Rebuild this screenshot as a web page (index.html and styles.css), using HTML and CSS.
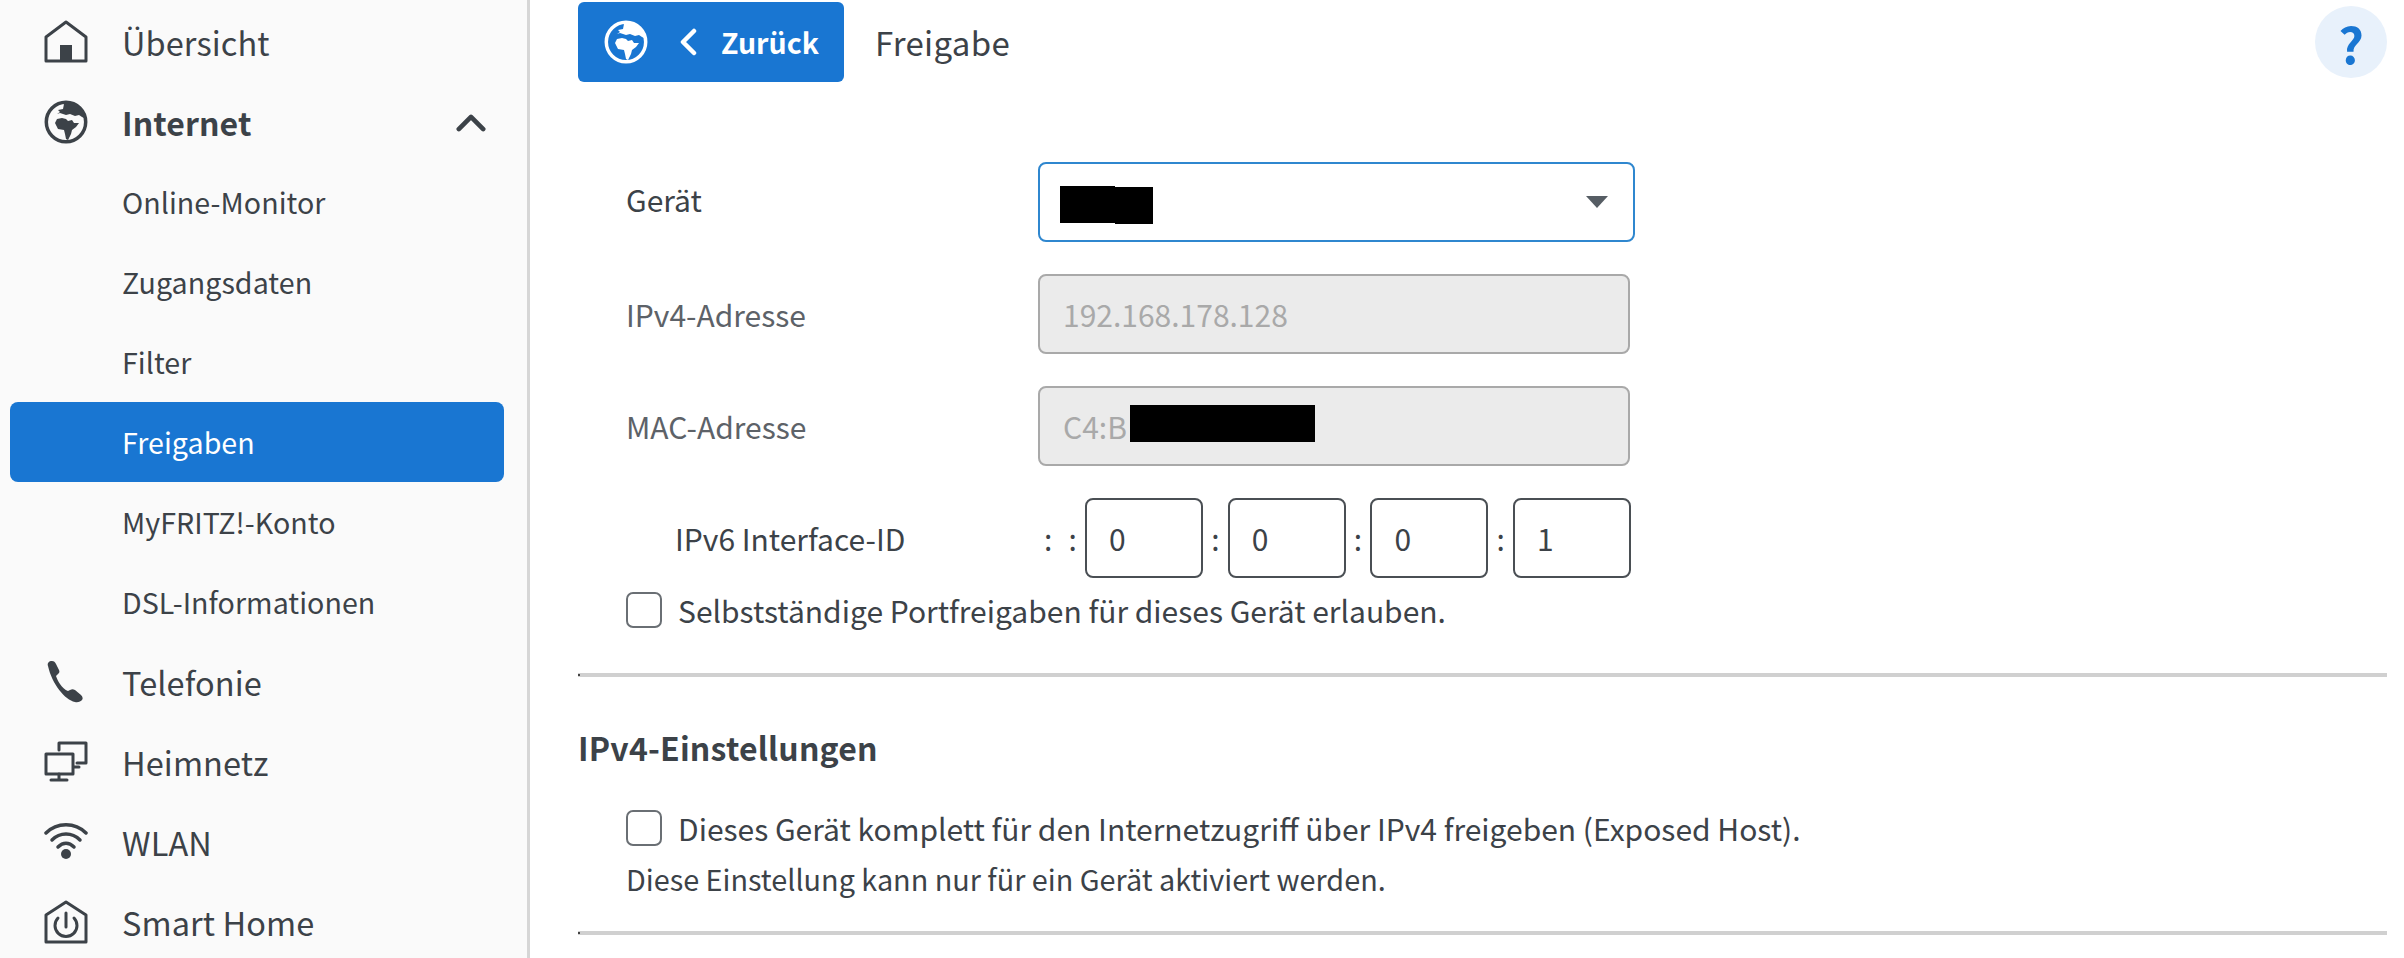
FILE: index.html
```html
<!DOCTYPE html>
<html lang="de">
<head>
<meta charset="utf-8">
<title>Freigabe</title>
<link rel="stylesheet" href="styles.css">
</head>
<body>
<svg class="defs" width="0" height="0" aria-hidden="true">
  <symbol id="globe" viewBox="0 0 44 44">
    <circle class="globe-ring" cx="22" cy="22" r="19.7"/>
    <path d="M14 10l5-1 1-5 11-1 8 7 3 9-4-2-3-2-4 1-5-2-4 1-6-2-3 1 3-2z"/>
    <path d="M11 23l2-4 5-1 4 1 2 2 4-1 2 3 5 0-3 4-4 3-1 4-3 6-2-1-1-5-1-4-6-1z"/>
  </symbol>
</svg>

<div class="layout">
  <nav class="sidebar">
    <a class="nav-item">
      <svg class="nav-icon" viewBox="0 0 44 44"><path class="line" d="M2 17 22 2l20 15v24H2z"/><path d="M16 25h12v16H16z"/></svg>
      <span>Übersicht</span>
    </a>
    <a class="nav-item nav-open">
      <svg class="nav-icon"><use href="#globe"/></svg>
      <span>Internet</span>
      <svg class="nav-chevron" viewBox="0 0 32 20"><path d="M3 17 16 4l13 13"/></svg>
    </a>
    <a class="nav-sub">Online-Monitor</a>
    <a class="nav-sub">Zugangsdaten</a>
    <a class="nav-sub">Filter</a>
    <a class="nav-sub nav-active">Freigaben</a>
    <a class="nav-sub">MyFRITZ!-Konto</a>
    <a class="nav-sub">DSL-Informationen</a>
    <a class="nav-item">
      <svg class="nav-icon" viewBox="0 0 44 44"><path d="M4 6c-1-3 1-5 4-5 2 0 3 1 4 3l3 6c1 2 0 3-1 4l-2 2c1 3 2 5 4 8s5 6 8 7l2-1c2-1 3-1 5 0l6 5c2 2 2 4 1 5s-4 3-7 2C21 40 8 24 4 6z"/></svg>
      <span>Telefonie</span>
    </a>
    <a class="nav-item">
      <svg class="nav-icon" viewBox="0 0 44 44"><path class="line thin" d="M15 10V3h27v20H33"/><path class="line thin" d="M2 14h27v20H2z"/><path class="line thin" d="M30 27h5M15 34v5M7 40h16"/></svg>
      <span>Heimnetz</span>
    </a>
    <a class="nav-item">
      <svg class="nav-icon" viewBox="0 0 44 44"><path class="line arc" d="M2 13C13 2 31 2 42 13"/><path class="line arc" d="M8 20c8-8 20-8 28 0"/><path class="line arc" d="M14 27c5-5 11-5 16 0"/><circle cx="22" cy="34" r="5"/></svg>
      <span>WLAN</span>
    </a>
    <a class="nav-item">
      <svg class="nav-icon" viewBox="0 0 44 44"><path class="line" d="M2 15 22 2l20 13v27H2z"/><path class="line" d="M14 18a11 11 0 1 0 16 0"/><path class="line" d="M22 13v14"/></svg>
      <span>Smart Home</span>
    </a>
  </nav>

  <main class="content">
    <header class="topbar">
      <a class="back">
        <svg class="back-globe"><use href="#globe"/></svg>
        <svg class="back-chevron" viewBox="0 0 18 28"><path d="M15 3 4 14l11 11"/></svg>
        <span>Zurück</span>
      </a>
      <h1 class="title">Freigabe</h1>
      <button class="help" type="button">?</button>
    </header>

    <section class="form">
      <div class="row row-first">
        <label class="label label-up">Gerät</label>
        <div class="select">
          <span class="redact-group"><span class="redact redact-a"></span><span class="redact redact-b"></span></span>
          <span class="caret"></span>
        </div>
      </div>
      <div class="row">
        <label class="label label-muted">IPv4-Adresse</label>
        <div class="field">192.168.178.128</div>
      </div>
      <div class="row">
        <label class="label label-muted">MAC-Adresse</label>
        <div class="field">C4:B<span class="redact redact-mac"></span></div>
      </div>
      <div class="row">
        <label class="label label-ipv6">IPv6 Interface-ID</label>
        <span class="colon colon-lead">:</span>
        <span class="colon colon-lead">:</span>
        <div class="box">0</div>
        <span class="colon">:</span>
        <div class="box">0</div>
        <span class="colon">:</span>
        <div class="box">0</div>
        <span class="colon">:</span>
        <div class="box">1</div>
      </div>
      <label class="check check-port"><span class="checkbox"></span>Selbstständige Portfreigaben für dieses Gerät erlauben.</label>
    </section>

    <hr class="rule rule-one">

    <h2 class="heading">IPv4-Einstellungen</h2>
    <section class="form">
      <label class="check check-host"><span class="checkbox"></span>Dieses Gerät komplett für den Internetzugriff über IPv4 freigeben (Exposed Host).</label>
      <p class="note">Diese Einstellung kann nur für ein Gerät aktiviert werden.</p>
    </section>

    <hr class="rule rule-two">
  </main>
</div>
</body>
</html>
```
FILE: styles.css
```css
* { box-sizing: border-box; }
html, body { margin: 0; height: 958px; overflow: hidden; background: #fff; }
body {
  font-family: "Noto Sans CJK SC", "Noto Sans", sans-serif;
  font-size: 30px;
  line-height: 40px;
  color: #3c4248;
}
.defs { position: absolute; }
.layout { display: flex; height: 958px; }

.sidebar {
  flex: 0 0 530px;
  height: 958px;
  padding: 2px 23px 0 10px;
  background: #fafafa;
  border-right: 3px solid #d6d6d6;
  overflow: hidden;
}
.nav-item, .nav-sub {
  display: flex;
  align-items: center;
  height: 80px;
  border-radius: 8px;
}
.nav-item { padding-left: 34px; gap: 34px; font-size: 32.5px; letter-spacing: .1px; color: #3c4248; }
.nav-sub { padding-left: 112px; font-size: 28.6px; letter-spacing: .05px; }
.nav-open { font-weight: 600; font-size: 32px; }
.nav-active { background: #1976d2; color: #fff; }
.nav-icon { width: 44px; height: 44px; flex: none; fill: #3c4248; color: #3c4248; }
.globe-ring { fill: none; stroke: currentColor; stroke-width: 3.5; }
.line { fill: none; stroke: #3c4248; stroke-width: 3; stroke-linejoin: round; stroke-linecap: round; }
.line.thin { stroke-width: 3; }
.line.arc { stroke-width: 3.5; }
.nav-chevron { width: 30px; height: 19px; margin-left: auto; margin-right: 18px; fill: none; stroke: #3c4248; stroke-width: 5; stroke-linecap: round; stroke-linejoin: round; }

.content { flex: 1; min-width: 0; padding: 2px 17px 0 48px; }
.topbar { display: flex; align-items: center; height: 80px; }
.back {
  display: flex;
  align-items: center;
  width: 266px;
  height: 80px;
  padding-left: 26px;
  border-radius: 6px;
  background: #1976d2;
  color: #fff;
  font-weight: 600;
  font-size: 28.5px;
}
.back-globe { width: 44px; height: 44px; fill: #fff; color: #fff; flex: none; }
.back-chevron { width: 18px; height: 28px; margin: 0 24px 0 31px; fill: none; stroke: #fff; stroke-width: 4.5; stroke-linecap: round; stroke-linejoin: round; flex: none; }
.title { margin: 0 0 0 31px; font-size: 33px; font-weight: 400; letter-spacing: .3px; }
.help {
  width: 72px;
  height: 72px;
  margin-left: auto;
  border: 0;
  border-radius: 50%;
  background: #e8f1fb;
  color: #1976d2;
  font-family: inherit;
  font-size: 50px;
  font-weight: 700;
  line-height: 68px;
  padding: 0;
}

.form { padding-left: 48px; }
.row { display: flex; align-items: center; margin-top: 32px; height: 80px; }
.row-first { margin-top: 80px; }
.label { flex: 0 0 412px; }
.label-up { margin-bottom: 6px; }
.label-muted { color: #5d6268; }
.label-ipv6 { flex-basis: 361px; margin-left: 49px; }
.select {
  display: flex;
  align-items: center;
  justify-content: space-between;
  width: 597px;
  height: 80px;
  padding: 0 25px 0 20px;
  background: #fff;
  border: 2px solid #2f87cf;
  border-radius: 8px;
}
.caret { width: 0; height: 0; border: 11px solid transparent; border-top: 12px solid #565d64; border-bottom: 0; }
.redact { display: inline-block; background: #000; }
.redact-group { display: flex; align-items: flex-start; margin-top: 6px; }
.redact-a { width: 55px; height: 37px; }
.redact-b { width: 38px; height: 37px; margin-top: 1px; }
.redact-mac { width: 185px; height: 37px; margin-left: 3px; vertical-align: -3px; }
.field {
  width: 592px;
  height: 80px;
  padding: 0 23px;
  background: #ebebeb;
  border: 2px solid #a9a9a9;
  border-radius: 8px;
  color: #a9a9a9;
  line-height: 76px;
}
.colon { flex: 0 0 24.7px; text-align: center; }
.colon-lead { flex-basis: 24.5px; }
.box {
  flex: 0 0 118px;
  height: 80px;
  padding: 0 22px;
  border: 2px solid #4a4f54;
  border-radius: 8px;
  line-height: 76px;
}
.check { display: flex; align-items: center; gap: 16px; height: 40px; }
.check-port { margin-top: 12px; }
.checkbox { flex: none; width: 36px; height: 36px; background: #fff; border: 2.5px solid #6a6f74; border-radius: 7px; }
.rule { position: relative; height: 4px; margin: 0; border: 0; background: #d0d0d0; }
.rule::before { content: ""; position: absolute; left: 0; top: 1px; width: 2px; height: 2px; background: #444; }
.rule-one { margin-top: 43px; }
.heading { margin: 50px 0 0; font-size: 32px; font-weight: 600; letter-spacing: .2px; line-height: 40px; }
.check-host { margin-top: 41px; }
.note { margin: 11px 0 0; height: 40px; font-size: 28.8px; }
.rule-two { margin-top: 32px; }
```
